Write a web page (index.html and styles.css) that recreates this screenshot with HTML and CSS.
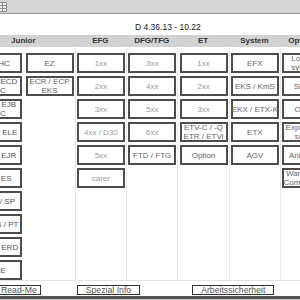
FILE: index.html
```html
<!DOCTYPE html>
<html lang="de">
<head>
  <meta charset="UTF-8">
  <title>Modellauswahl</title>
  <link rel="stylesheet" href="styles.css">
</head>
<body>
  <div class="titlebar">
    <svg class="winicon" width="8" height="10" viewBox="0 0 8 10">
      <rect x="0" y="0" width="8" height="10" fill="#8c8c8c"/>
      <rect x="1" y="1" width="2" height="2" fill="#eee"/>
      <rect x="4" y="1" width="3" height="2" fill="#eee"/>
      <rect x="1" y="4" width="2" height="2" fill="#eee"/>
      <rect x="4" y="4" width="3" height="2" fill="#eee"/>
      <rect x="1" y="7" width="2" height="2" fill="#eee"/>
      <rect x="4" y="7" width="3" height="2" fill="#eee"/>
    </svg>
  </div>

  <div class="version">D 4.36.13 - 10.22</div>

  <div class="board">
    <div class="heads">
      <div class="head junior">Junior</div>
      <div class="head">EFG</div>
      <div class="head">DFG/TFG</div>
      <div class="head">ET</div>
      <div class="head">System</div>
      <div class="head">Optionen</div>
    </div>

    <div class="cols">
      <div class="col">
        <div class="btn dark">EJ HC</div>
        <div class="btn dark">EJE / ECD<br>EJC</div>
        <div class="btn dark">EJE / EJB<br>EJC</div>
        <div class="btn dark">ERE / ELE</div>
        <div class="btn dark">EJE / EJR</div>
        <div class="btn dark">EJ / ES</div>
        <div class="btn dark">ERP / SP</div>
        <div class="btn dark">EKS S / PT</div>
        <div class="btn dark">ERE / ERD</div>
        <div class="btn dark">EJE</div>
      </div>
      <div class="col nosep">
        <div class="btn">EZ</div>
        <div class="btn">ECR / ECP<br>EKS</div>
      </div>
      <div class="col">
        <div class="btn light">1xx</div>
        <div class="btn light">2xx</div>
        <div class="btn light">3xx</div>
        <div class="btn light">4xx / D30</div>
        <div class="btn light">5xx</div>
        <div class="btn light">carer</div>
      </div>
      <div class="col">
        <div class="btn light">3xx</div>
        <div class="btn light">4xx</div>
        <div class="btn light">5xx</div>
        <div class="btn light">6xx</div>
        <div class="btn">FTD / FTG</div>
      </div>
      <div class="col">
        <div class="btn light">1xx</div>
        <div class="btn light">2xx</div>
        <div class="btn light">3xx</div>
        <div class="btn">ETV-C / -Q<br>ETR / ETVi</div>
        <div class="btn">Option</div>
      </div>
      <div class="col">
        <div class="btn">EFX</div>
        <div class="btn">EKS / KmS</div>
        <div class="btn">EKX / ETX-K</div>
        <div class="btn">ETX</div>
        <div class="btn">AGV</div>
      </div>
      <div class="col">
        <div class="btn">Logistik-<br>systeme</div>
        <div class="btn">Shuttle</div>
        <div class="btn">Option</div>
        <div class="btn">Explosions-<br>schutz</div>
        <div class="btn">Anhänger</div>
        <div class="btn">Warehouse<br>Components</div>
      </div>
      <div class="col"></div>
    </div>
  </div>

  <div class="footer">
    <div class="fbtn readme">Read-Me</div>
    <div class="fbtn spezial">Spezial Info</div>
    <div class="fbtn arbeit">Arbeitssicherheit</div>
  </div>
</body>
</html>
```

FILE: styles.css
```css
body {
  margin: 0;
  width: 300px;
  height: 300px;
  overflow: hidden;
  background: #c4c4c4;
  font-family: "Liberation Sans", Arial, sans-serif;
}
.titlebar {
  height: 13px;
  background: #d6d6d6;
  border-bottom: 1px solid #9a9a9a;
  display: flex;
  align-items: center;
}
.winicon {
  display: block;
  margin-left: -1px;
}
.version {
  height: 21px;
  background: #fff;
  padding-left: 135px;
  padding-top: 9px;
  box-sizing: border-box;
  font-size: 8.5px;
  line-height: 9px;
  color: #222;
}
.board {
  background: #fff;
  margin-left: -28px;
  width: 411px;
}
.heads {
  display: grid;
  grid-template-columns: repeat(8, 51.35px);
  height: 12px;
  background: #d2d2d2;
}
.head {
  font-size: 8px;
  font-weight: bold;
  color: #333;
  text-align: center;
  line-height: 12px;
}
.head.junior {
  grid-column: span 2;
}
.cols {
  display: grid;
  grid-template-columns: repeat(8, 51.35px);
  height: 233px;
}
.col {
  border-left: 1px solid #e8e8e8;
  display: flex;
  flex-direction: column;
  align-items: center;
  gap: 3px;
  padding-top: 6px;
}
.col.nosep {
  border-left-color: transparent;
}
.btn {
  width: 48px;
  height: 20px;
  box-sizing: border-box;
  border: 2px solid #4d4d4d;
  background: #fff;
  display: flex;
  align-items: center;
  justify-content: center;
  text-align: center;
  font-size: 8px;
  line-height: 9px;
  color: #666;
  white-space: nowrap;
}
.btn.dark {
  color: #555;
}
.btn.light {
  color: #9a9a9a;
}
.footer {
  background: #fff;
  border-top: 1px solid #e2e2e2;
  border-bottom: 3px solid #555;
  height: 15px;
  padding-top: 4px;
  box-sizing: border-box;
  height: 19px;
  display: flex;
  align-items: flex-start;
}
.fbtn {
  border: 1px solid #333;
  height: 10px;
  box-sizing: border-box;
  padding: 0 8px;
  font-size: 8.7px;
  line-height: 8px;
  color: #555;
  white-space: nowrap;
}
.fbtn.readme {
  margin-left: -8px;
  padding-right: 3px;
}
.fbtn.spezial {
  margin-left: 36px;
}
.fbtn.arbeit {
  margin-left: 52px;
}
```
